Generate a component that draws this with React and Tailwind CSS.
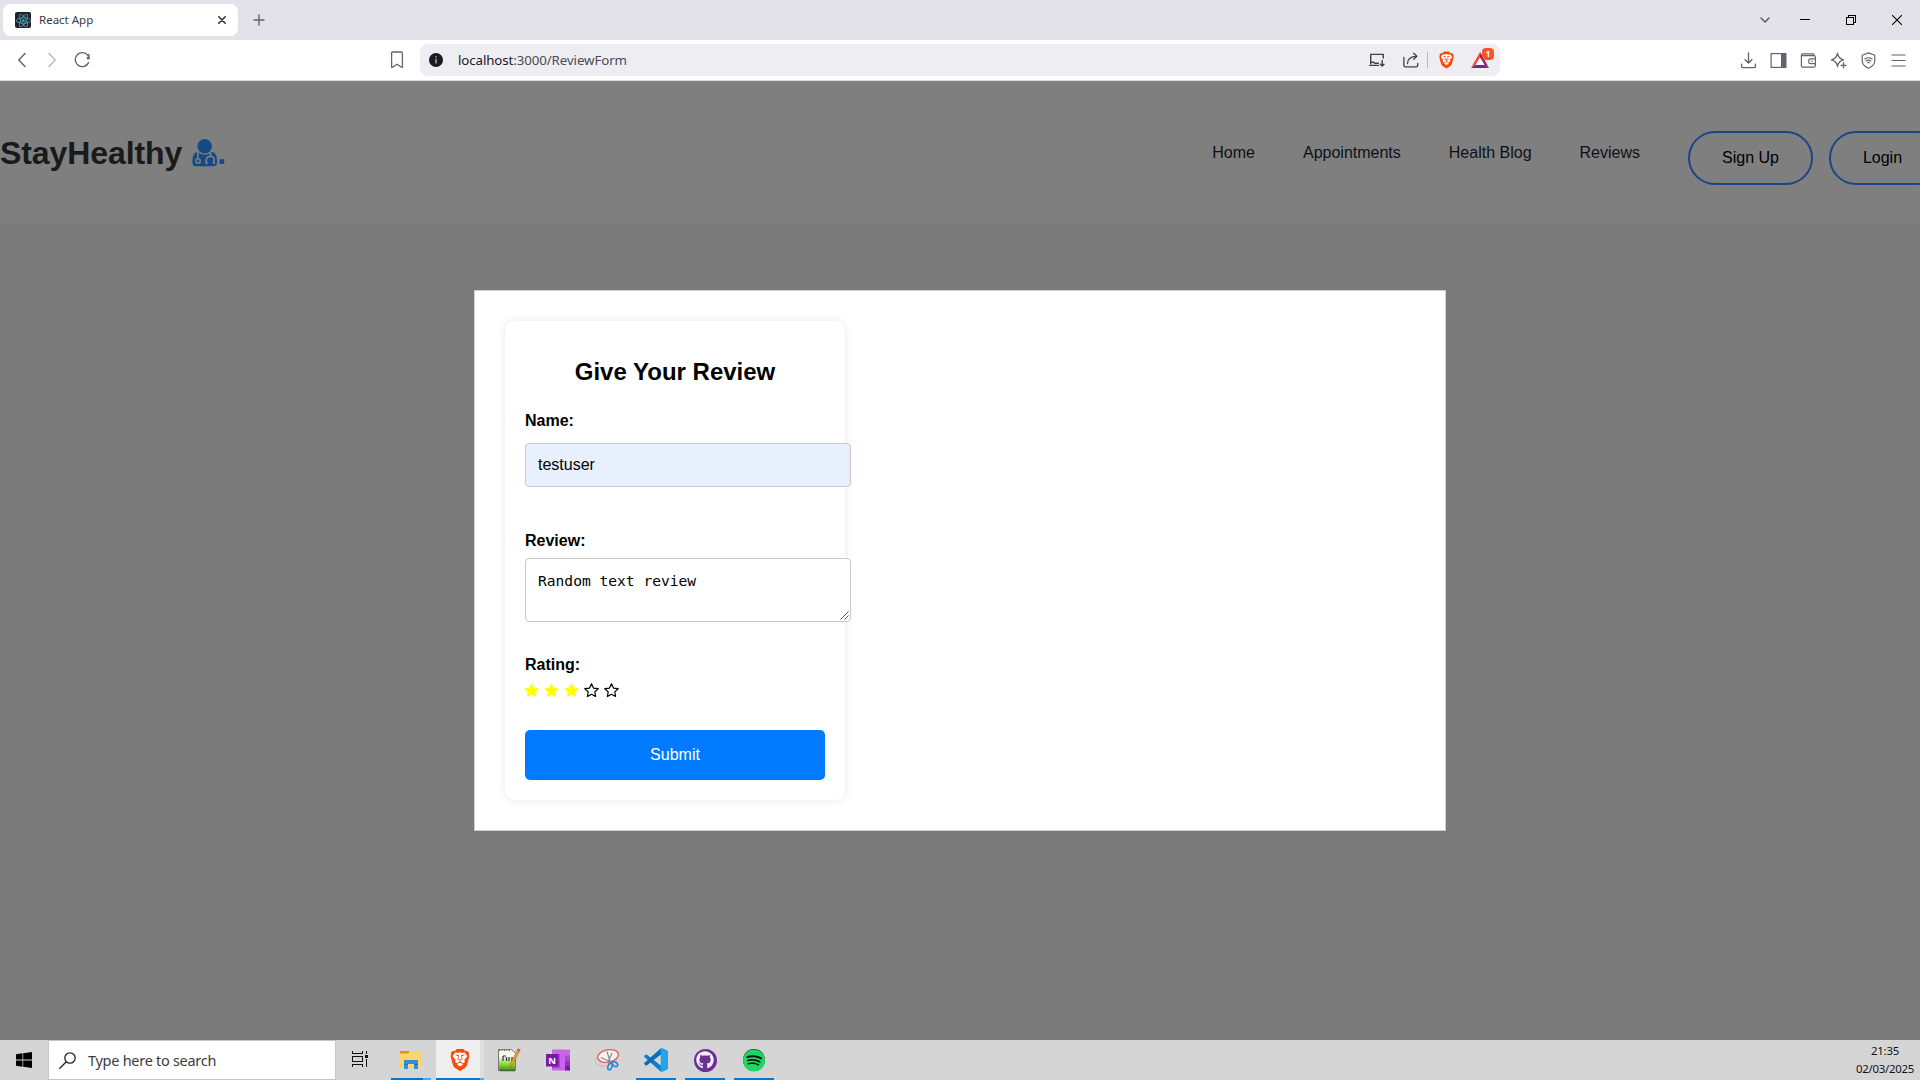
import React from "react";
import { FaGithub, FaSpotify, FaReact } from "react-icons/fa";
import { SiBrave } from "react-icons/si";

const line = { fill: "none", stroke: "currentColor", strokeLinecap: "round", strokeLinejoin: "round" };

function Glyph({ className = "w-4 h-4", box = "0 0 16 16", sw = 1.1, children }) {
  return (
    <svg className={"shrink-0 " + className} viewBox={box} {...line} strokeWidth={sw}>
      {children}
    </svg>
  );
}

function TabStrip() {
  return (
    <div className="flex h-10 items-center bg-[#e3e2e8] pl-[3px]">
      <div className="flex h-8 w-[235px] items-center rounded-lg bg-white pl-3 pr-[11px]">
        <span className="flex size-4 items-center justify-center rounded-[2px] bg-[#20232a]">
          <FaReact className="size-[15px] text-[#53b5cf]" />
        </span>
        <span className="ml-2 flex-1 whitespace-nowrap text-[11.5px] text-[#3b3b42]">React App</span>
        <Glyph className="size-[10px] text-[#33343b]" box="0 0 10 10" sw={1.6}>
          <path d="M1.8 1.8l6.4 6.4M8.2 1.8L1.8 8.2" />
        </Glyph>
      </div>
      <Glyph className="ml-[15px] size-3 text-[#62646d]" box="0 0 12 12" sw={1.4}>
        <path d="M6 1v10M1 6h10" />
      </Glyph>
      <div className="ml-auto flex items-center">
        <Glyph className="mr-[30px] h-[10px] w-[10px] text-[#5f6168]" box="0 0 10 10" sw={1.6}>
          <path d="M1 3l4 4 4-4" />
        </Glyph>
        <svg className="mr-[36px] h-[10px] w-[10px]" viewBox="0 0 10 10" shapeRendering="crispEdges">
          <path d="M0 4h10v1H0z" />
        </svg>
        <svg className="mr-[36px] h-[10px] w-[10px]" viewBox="0 0 10 10" fill="none" stroke="#000" shapeRendering="crispEdges">
          <path d="M.5 2.5h7v7h-7zM2.5 2.5v-2h7v7h-2" />
        </svg>
        <svg className="mr-[18px] h-[10px] w-[10px]" viewBox="0 0 10 10" stroke="#000" strokeWidth="1.1">
          <path d="M0 0l10 10M10 0L0 10" />
        </svg>
      </div>
    </div>
  );
}

function Toolbar() {
  return (
    <div className="flex h-[41px] items-center border-b border-[#dadce0] bg-white text-[#62646d]">
      <Glyph className="ml-[14px] size-4" sw={1.4}><path d="M11 1.5L4.8 8l6.2 6.5" /></Glyph>
      <Glyph className="ml-[14px] size-4 text-[#b9bac0]" sw={1.4}><path d="M5 1.5L11.2 8 5 14.5" /></Glyph>
      <Glyph className="ml-[13px] size-[18px]" box="0 0 18 18" sw={1.4}>
        <path d="M15.6 11.6A7 7 0 1 1 15 4.6" />
        <circle cx="15.2" cy="7" r="1.6" fill="currentColor" stroke="none" />
        <path d="M15.8 3.5v3" />
      </Glyph>
      <Glyph className="ml-[297px] size-[18px]" box="0 0 18 18" sw={1.3}>
        <path d="M3.6 2.2q0-1.2 1.2-1.2h8.4q1.2 0 1.2 1.2v13.6q0 1-.9.5L9 13.2l-4.5 3.1q-.9.5-.9-.5z" />
      </Glyph>
      <div className="ml-[14px] flex h-8 w-[1080px] items-center rounded-lg bg-[#eeedf2] pl-[9px] pr-[7px] text-[#3f4149]">
        <svg className="size-[14px]" viewBox="0 0 14 14">
          <circle cx="7" cy="7" r="7" fill="#1b1a22" />
          <path d="M6.3 3.2h1.4v1.4H6.3zM6.4 5.8h1.2v4.8H6.4z" fill="#c6c6ce" />
        </svg>
        <span className="ml-[15px] mt-px flex-1 whitespace-nowrap text-[13.3px] tracking-[-0.1px] text-[#4a4b54]">
          <span className="text-[#18181f]">localhost</span>:3000/ReviewForm
        </span>
        <Glyph className="size-4" sw={1.4}>
          <path d="M14.3 6V2.4H1.7v9.4M.8 13.4h8.6M1.7 10.2h3l1 1h3.7M13.2 8.5v5.4M11.4 12.2l1.8 1.9 1.8-1.9" />
        </Glyph>
        <Glyph className="ml-[18px] size-4" sw={1.3}>
          <path d="M.9 5.5v8q0 1.4 1.4 1.4h11q1.4 0 1.4-1.4v-2M4.5 11.5Q4.8 4.3 13.5 4.3M10.7 1.2l3.2 3.1-3.2 3.1" />
        </Glyph>
        <span className="ml-[8px] h-4 w-px bg-[#b9bac1]" />
        <span className="ml-[10px] flex h-5 w-[17px] items-center justify-center">
          <BraveMark className="h-[18px] w-[17px]" />
        </span>
        <span className="relative ml-[16px] flex h-6 w-[22px] items-center">
          <svg className="h-4 w-[18px]" viewBox="0 0 18 16">
            <path d="M9 0L0 16l4.6-2.9L9 5.4z" fill="#ff4724" />
            <path d="M9 0l9 16-4.6-2.9L9 5.4z" fill="#9e1f63" />
            <path d="M0 16h18l-4.6-2.9H4.6z" fill="#662d91" />
            <path d="M9 5.4l4.4 7.7H4.6z" fill="#fff" />
          </svg>
          <span className="absolute left-[11px] top-0 flex h-[12px] w-[12px] items-center justify-center rounded-[4px] bg-[#fb542b] text-[8px] font-bold text-white">1</span>
        </span>
      </div>
      <div className="ml-auto mr-[14px] flex items-center gap-[13px]">
        <Glyph className="size-[17px]" sw={1.3}><path d="M8 1v9M4.8 7.2L8 10.3l3.2-3.1M1.5 11.5v2.2q0 1 1 1h11q1 0 1-1v-2.2" /></Glyph>
        <svg className="size-[17px]" viewBox="0 0 17 17">
          <rect x="1.1" y="1.6" width="14.8" height="13.8" fill="none" stroke="currentColor" strokeWidth="1.2" />
          <path d="M11 1.5h5v14h-5z" fill="currentColor" />
        </svg>
        <Glyph className="size-[17px]" box="0 0 17 17" sw={1.2}>
          <path d="M1.4 3.6q0-1.8 1.8-1.8h9.6q1.4 0 1.4 1.6M1.4 3.6h12.2q1.8 0 1.8 1.8v8q0 1.8-1.8 1.8H3.2q-1.8 0-1.8-1.8zM15.4 6.9h-5q-1.6 0-1.6 1.3v2q0 1.4 1.6 1.4h5" />
          <path d="M11.8 9.2h.4" />
        </Glyph>
        <Glyph className="size-[17px]" box="0 0 17 17" sw={1.3}>
          <path d="M7.5 1.2q.7 5.1 6 6.7-5.3 1.4-6 6.6-.7-5.2-6-6.6 5.3-1.6 6-6.7zM13.5 10.8v5M11 13.3h5" />
        </Glyph>
        <Glyph className="size-[17px]" box="0 0 17 17" sw={1.2}>
          <path d="M8.5.9l6.3 2.3v5.2q0 5-6.3 7.9-6.3-2.9-6.3-7.9V3.2zM4.9 7q3.6-2.5 7.2 0M6.2 8.9q2.3-1.5 4.6 0M7.6 10.7q.9-.5 1.8 0" />
        </Glyph>
        <svg className="ml-px size-[15px]" viewBox="0 0 15 15" stroke="currentColor" strokeWidth="1.2">
          <path d="M.5 2h14M.5 7.5h14M.5 13h14" />
        </svg>
      </div>
    </div>
  );
}

function BraveMark({ className }) {
  return (
    <span className={"relative flex items-center justify-center " + className}>
      <svg className="absolute h-[82%] w-[70%]" viewBox="0 0 10 12"><path d="M1 1h8v7l-4 4-4-4z" fill="#fff" /></svg>
      <SiBrave className="relative h-full w-full text-[#fb4a10]" />
    </span>
  );
}

function DoctorIcon() {
  return (
    <svg className="ml-[10px] h-7 w-[26px]" viewBox="0 0 26 28">
      <circle cx="12.7" cy="7.3" r="7.2" fill="#144a86" />
      <path d="M5.5 12.8Q.4 14 .4 22v1.5q0 3.7 3.7 3.7h17.3q3.7 0 3.7-3.7V22q0-8-5.1-9.2-3 3-7.3 3-4.2 0-7.2-3z" fill="#144a86" />
      <path d="M5.8 13v6.7M18.6 13.5v3.8M14.3 24v-3q0-3.7 4.1-3.7T22 21v3" fill="none" stroke="#7f7f7f" strokeWidth="1.7" />
      <circle cx="6" cy="22" r="2.2" fill="#144a86" stroke="#7f7f7f" strokeWidth="1.6" />
      <circle cx="14.5" cy="24" r="1.2" fill="#7f7f7f" />
      <circle cx="21.8" cy="24" r="1.2" fill="#7f7f7f" />
    </svg>
  );
}

const links = ["Home", "Appointments", "Health Blog", "Reviews"];

function SiteNav() {
  return (
    <nav className="flex h-36 items-start overflow-hidden bg-[#7f7f7f] font-['Liberation_Sans',Arial,sans-serif]">
      <div className="mt-[54px] flex h-9 items-center text-[32px] font-bold leading-9 tracking-[-0.08px] text-[#1a1a1a]">
        StayHealthy
        <DoctorIcon />
        <span className="-ml-px text-[#144a86]">.</span>
      </div>
      <div className="-mr-6 ml-auto flex shrink-0 items-start text-base text-[#0d1117]">
        <div className="mt-[60px] flex gap-12 pr-12 leading-6">
          {links.map((l) => <a key={l} className="whitespace-nowrap">{l}</a>)}
        </div>
        <button className="mr-4 mt-[50px] h-[54px] w-[125px] rounded-[27px] border-2 border-[#1c4587] text-black">Sign Up</button>
        <button className="mt-[50px] h-[54px] w-[115px] rounded-[27px] border-2 border-[#1c4587] pr-[8px] text-black">Login</button>
      </div>
    </nav>
  );
}

const starPath = "M7.5.8l2 4.3 4.7.6-3.4 3.2.8 4.6-4.1-2.2-4.1 2.2.8-4.6L.8 5.7l4.7-.6z";

function Star({ on }) {
  return (
    <svg className="h-[15px] w-[15px]" viewBox="0 0 15 15">
      <path
        d={starPath}
        className={on ? "fill-[#ffff00] stroke-[#ffff00]" : "fill-none stroke-black"}
        strokeWidth={on ? 0.9 : 1.2}
        strokeLinejoin="round"
      />
    </svg>
  );
}

function ReviewCard() {
  return (
    <div className="flex h-[479px] w-[340px] flex-col rounded-[10px] bg-white p-5 shadow-[0_0_10px_rgba(0,0,0,0.1)]">
      <h2 className="mt-[17px] text-center text-2xl font-bold leading-7">Give Your Review</h2>
      <label className="mt-[25px] h-5 text-base font-bold leading-5">Name:</label>
      <div className="mt-[12px] flex h-11 w-[326px] shrink-0 items-center rounded-[4px] border border-[#c8c8cc] bg-[#e8f0fe] px-3 text-base">testuser</div>
      <label className="mt-[44px] h-5 text-base font-bold leading-5">Review:</label>
      <div className="mt-[7px] flex h-16 w-[326px] shrink-0 justify-between rounded-[4px] border border-[#c8c8c8] bg-white pl-3 font-['DejaVu_Sans_Mono',monospace] text-[14.6px]">
        <span className="mt-[12px] leading-5">Random text review</span>
        <svg className="mb-px mr-px size-[9px] self-end" viewBox="0 0 9 9" stroke="#555" strokeWidth="1">
          <path d="M.5 8.5l8-8M4.5 8.5l4-4" />
        </svg>
      </div>
      <label className="mt-[33px] h-5 text-base font-bold leading-5">Rating:</label>
      <div className="-ml-px mt-[8px] flex h-[15px] gap-[5px]">
        {[1, 2, 3, 4, 5].map((n) => <Star key={n} on={n <= 3} />)}
      </div>
      <button className="mt-auto h-[50px] w-full rounded-[5px] bg-[#007bff] text-base text-white">Submit</button>
    </div>
  );
}

function FolderIcon() {
  return (
    <svg className="h-[22px] w-[22px]" viewBox="0 0 22 20">
      <path d="M0 1h9v4H0z" fill="#d89a08" />
      <path d="M0 3.5h8l1.8-1.7H21V18H0z" fill="#fcd56b" />
      <path d="M4 11q0-1 1-1h12q1 0 1 1v8h-4v-5H8v5H4z" fill="#2f8fdc" />
      <path d="M4 14h4v1H4zM14 14h4v1h-4z" fill="#1f77c0" />
    </svg>
  );
}

function NotepadIcon() {
  return (
    <svg className="h-6 w-6" viewBox="0 0 24 24">
      <defs>
        <linearGradient id="leaf" x1="0" y1="0" x2="0" y2="1">
          <stop offset="0.35" stopColor="#f4f8ee" />
          <stop offset="0.75" stopColor="#7ed321" />
          <stop offset="1" stopColor="#3f8f12" />
        </linearGradient>
      </defs>
      <path d="M1.5 1.5h13l4 4v17h-17z" fill="url(#leaf)" stroke="#777" />
      <path d="M2 2.5h12" stroke="#555" strokeDasharray="1 1.5" />
      <path d="M6 8v5M6 8h3M9.5 9v4M12 9v4M15 9v4" stroke="#333" strokeWidth="1.2" />
      <path d="M3 22.5h15" stroke="#555" strokeWidth="1.5" />
      <path d="M21 1l2 1-7.5 15-2.5 2 .5-3.5z" fill="#eda52b" stroke="#8a5a1c" strokeWidth=".5" />
      <path d="M21 .5l2.5 1-.8 2-2.5-1.2z" fill="#cf5a4a" />
    </svg>
  );
}

function OneNoteIcon() {
  return (
    <svg className="h-6 w-6" viewBox="0 0 24 24">
      <path d="M6 1.5h18v21H6z" fill="#ca64ea" />
      <path d="M19 7.5h5v5h-5z" fill="#ae4bd5" />
      <path d="M19 12.5h5v5h-5z" fill="#9332bf" />
      <path d="M19 17.5h5v5h-5z" fill="#7719aa" />
      <path d="M6 6h8v14H6z" fill="#8d35b8" opacity=".6" />
      <path d="M0 6h12.500v12.500H0z" fill="#7719aa" />
      <text x="6.2" y="15.5" textAnchor="middle" fill="#fff" fontSize="9.5" fontWeight="700" className="font-['Open_Sans',sans-serif]">N</text>
    </svg>
  );
}

function SnipIcon() {
  return (
    <svg className="h-6 w-6" viewBox="0 0 24 24" fill="none">
      <ellipse cx="11" cy="12" rx="11" ry="6" stroke="#e8a0a0" strokeWidth=".8" transform="rotate(-8 11 12)" />
      <ellipse cx="13" cy="8" rx="10.5" ry="6.2" fill="#f2f2f2" stroke="#e35a5a" strokeWidth="1.3" transform="rotate(-12 13 8)" />
      <path d="M12 3.5l3.5 11M6 9.5l10 4.5M17 5l-4 9" stroke="#8a8a8a" strokeWidth="1.2" />
      <ellipse cx="15" cy="18.5" rx="2" ry="3.4" stroke="#2a86cf" strokeWidth="1.6" transform="rotate(18 15 18.5)" />
      <ellipse cx="19.8" cy="16" rx="3.2" ry="2" stroke="#2a86cf" strokeWidth="1.6" transform="rotate(38 19.8 16)" />
    </svg>
  );
}

function CodeIcon() {
  return (
    <svg className="h-6 w-6" viewBox="0 0 24 24">
      <path d="M1.4 6.8L.3 7.9q-.5.6 0 1.2L17.2 23.9V17.7L3 6.8q-.8-.5-1.6 0z" fill="#0f7fcb" />
      <path d="M1.4 17.2L.3 16.1q-.5-.6 0-1.2L17.2.1v6.2L3 17.2q-.8.5-1.6 0z" fill="#0a6db5" />
      <path d="M17.3.2q.6-.2 1.2 0l4.8 2.3q.7.4.7 1.2v16.6q0 .8-.7 1.2l-4.8 2.3q-.6.2-1.2 0-.6-.3-.6-1V1.2q0-.7.6-1z" fill="#27a3ee" />
    </svg>
  );
}

function Task({ children, bar = "", active = false }) {
  return (
    <div className={"flex h-10 w-[49px] " + (active ? "pl-px" : "pl-[5px]")}>
      <div className={"relative flex h-10 items-center justify-center " + (active ? "w-[48px] bg-linear-to-r from-[#eeeeee] from-[92%] to-[#dedede] to-[92%]" : "w-10")}>
        {children}
        {bar && <span className={"absolute inset-x-0 bottom-0 h-[2px] " + bar} />}
      </div>
    </div>
  );
}

function Taskbar() {
  return (
    <footer className="flex h-10 items-center bg-[#d5d5d5]">
      <div className="flex w-[48px] justify-center">
        <svg className="h-4 w-4" viewBox="0 0 16 16">
          <path d="M0 2.2L6.5 1.3v6.3H0zM7.2 1.2L16 0v7.600H7.200zM0 8.400h6.500v6.300L0 13.800zM7.200 8.400H16V16l-8.800-1.200z" />
        </svg>
      </div>
      <div className="flex h-10 w-[288px] items-center border border-[#c6c6c6] bg-white pl-[10px]">
        <Glyph className="size-[17px] text-[#222]" box="0 0 17 17" sw={1.3}>
          <circle cx="11" cy="6" r="5.2" />
          <path d="M7.3 9.7L.8 16.2" />
        </Glyph>
        <span className="ml-[12px] mt-[2px] whitespace-nowrap text-[14.5px] tracking-[-0.28px] text-[#3c3c3c]">Type here to search</span>
      </div>
      <div className="flex w-[50px] pl-4">
        <svg className="mt-[-2px] h-[16px] w-[17px]" viewBox="0 0 17 16" fill="none" stroke="#111" shapeRendering="crispEdges">
          <path d="M.5 0v2.5h10V0M.5 5.5h10v5H.5zM.5 16v-2.5h10V16M14.5 0v3M14.5 8v8" />
          <path d="M13 4h3v3h-3z" fill="#111" stroke="none" />
        </svg>
      </div>
      <Task bar="bg-linear-to-r from-[#0078d7] from-80% to-[#5aa7e4] to-80%"><FolderIcon /></Task>
      <Task active bar="bg-linear-to-r from-[#0078d7] from-[92%] to-[#5aa7e4] to-[92%]"><BraveMark className="h-6 w-[22px]" /></Task>
      <Task><NotepadIcon /></Task>
      <Task><OneNoteIcon /></Task>
      <Task><SnipIcon /></Task>
      <Task bar="bg-[#0078d7]"><CodeIcon /></Task>
      <Task bar="bg-[#0078d7]">
        <span className="flex size-[23px] items-center justify-center rounded-full bg-[#6b2f96]"><FaGithub className="size-[18px] text-[#f3edf7]" /></span>
      </Task>
      <Task bar="bg-[#0078d7]">
        <span className="flex size-[22px] items-center justify-center rounded-full bg-[#111]"><FaSpotify className="size-[23px] text-[#1ed760]" /></span>
      </Task>
      <div className="ml-auto mr-[6px] flex w-[58px] flex-col items-center whitespace-nowrap text-[11.4px] leading-[18px] tracking-[-0.25px] text-[#111]">
        <span>21:35</span>
        <span>02/03/2025</span>
      </div>
    </footer>
  );
}

export default function App() {
  return (
    <div className="flex h-[1080px] w-[1920px] flex-col overflow-hidden bg-[#7a7a7a] font-['Noto_Sans','Open_Sans',sans-serif]">
      <TabStrip />
      <Toolbar />
      <SiteNav />
      <main className="flex flex-1 justify-center pt-[65px] font-['Liberation_Sans',Arial,sans-serif] text-black">
        <section className="h-[541px] w-[972px] border border-[#cfcfcf] bg-white p-[30px]">
          <ReviewCard />
        </section>
      </main>
      <Taskbar />
    </div>
  );
}
